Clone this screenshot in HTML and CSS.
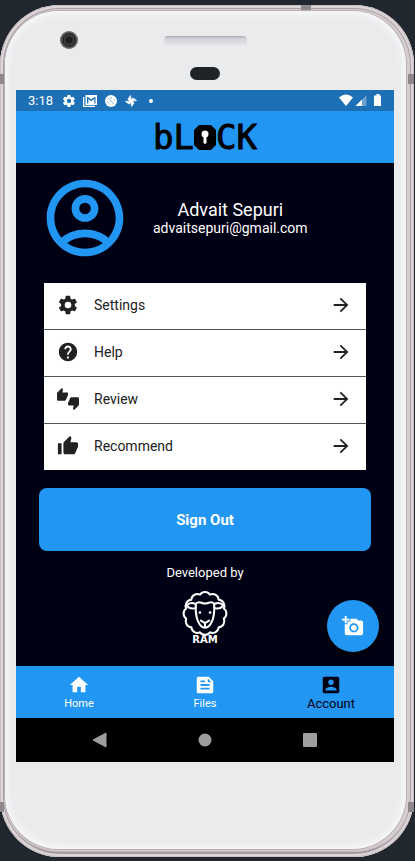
FILE: index.html
```html
<!DOCTYPE html>
<html lang="en">
<head>
<meta charset="utf-8">
<meta name="viewport" content="width=device-width, initial-scale=1">
<title>bLOCK – Account</title>
<link rel="stylesheet" href="styles.css">
</head>
<body>
<div class="phone">
  <span class="seam seam-top"></span>
  <span class="seam seam-left"></span>
  <span class="seam seam-right"></span>
  <span class="seam seam-left seam-low"></span>
  <span class="seam seam-right seam-low"></span>
  <span class="side-key"></span>
  <div class="face">
    <div class="bezel">
      <span class="camera"></span>
      <div class="bezel-middle">
        <span class="speaker"></span>
        <span class="sensor"></span>
      </div>
    </div>

    <div class="screen">
      <div class="status">
        <span class="clock">3:18</span>
        <svg class="status-icon" viewBox="2 2 20 20"><path fill-rule="evenodd" d="M19.4 13a7.500 7.500 0 0 0 0-2l2.100-1.600c.2-.2.300-.4.100-.7l-2-3.400c-.1-.2-.4-.3-.6-.2l-2.500 1a7 7 0 0 0-1.700-1l-.4-2.600a.5.5 0 0 0-.5-.5h-4a.5.5 0 0 0-.5.5L9 5.100a7 7 0 0 0-1.700 1l-2.500-1c-.2-.1-.5 0-.6.2l-2 3.400c-.1.300 0 .5.100.7L4.500 11a8 8 0 0 0 0 2l-2.200 1.600c-.1.200-.2.400-.1.700l2 3.400c.1.200.4.300.6.200l2.500-1a7 7 0 0 0 1.700 1l.4 2.600c0 .3.200.5.500.5h4c.3 0 .5-.2.500-.5l.4-2.600a7 7 0 0 0 1.700-1l2.500 1c.2.100.5 0 .6-.2l2-3.400c.2-.3.100-.5-.1-.7zM12 15.600a3.600 3.600 0 1 1 0-7.200 3.600 3.600 0 0 1 0 7.200z"/></svg>
        <svg class="status-icon status-mail" viewBox="0 0 14 12"><path d="M.7 2v9.300H12" fill="none" stroke="#fff" stroke-width="1.200"/><path fill-rule="evenodd" d="M2.500 0H14v10H2.500zM4 2v6.500h1.300V4l3 2.300 3-2.300v4.500h1.200V2h-1l-3.200 2.500L5 2z"/></svg>
        <svg class="status-icon" viewBox="0 0 12 12"><circle cx="6" cy="6" r="6"/><path d="M3 3l6 6M5.500 2l1 2M8.500 4.500l1 1M2.500 6.500l1 2" stroke="#1d70b5" stroke-width=".5"/></svg>
        <svg class="status-icon" viewBox="0 0 24 24"><path d="M12 12H9L6 8l5-7zM12 12V9l4-3 7 5zM12 12h3l3 4-5 7zM12 12v3l-4 3-7-5z" stroke="#fff" stroke-width="1.500" stroke-linejoin="round"/></svg>
        <span class="status-dot"></span>
        <svg class="status-signal" viewBox="0 0 42 13"><path d="M0 3.500Q7-2.500 14 3.500L7 12z"/><path d="M27.500 1v11h-11z" opacity=".35"/><path d="M23 5.500V12h-6.500z"/><path d="M36 1.500h1.500V0h3v1.500H42V12h-7V1.500z"/></svg>
      </div>

      <header class="app-bar">
        <h1 class="logo">bL<svg class="logo-lock" viewBox="0 0 22 25" aria-label="O"><path d="M5 0h12l5 5v15l-5 5H5l-5-5V5z"/><circle cx="11" cy="9" r="3.500" fill="#fff"/><path d="M9.500 10h3v8l-1.500 1-1.500-1z" fill="#fff"/></svg>CK</h1>
      </header>

      <main class="content">
        <section class="profile">
          <svg class="avatar" viewBox="0 0 24 24"><path fill-rule="evenodd" d="M12 2C6.480 2 2 6.480 2 12s4.480 10 10 10 10-4.480 10-10S17.520 2 12 2zM7.350 18.500C8.660 17.560 10.260 17 12 17s3.340.56 4.650 1.500C15.340 19.440 13.740 20 12 20s-3.340-.56-4.650-1.500zm10.790-1.380C16.450 15.800 14.320 15 12 15s-4.450.8-6.140 2.120C4.700 15.730 4 13.950 4 12c0-4.420 3.580-8 8-8s8 3.580 8 8c0 1.950-.7 3.730-1.860 5.120zM12 6c-1.930 0-3.500 1.570-3.500 3.500S10.070 13 12 13s3.500-1.570 3.500-3.500S13.930 6 12 6zm0 5a1.500 1.500 0 1 1 0-3 1.500 1.500 0 0 1 0 3z"/></svg>
          <div class="identity">
            <h2 class="name">Advait Sepuri</h2>
            <p class="email">advaitsepuri@gmail.com</p>
          </div>
        </section>

        <ul class="menu">
          <li><a class="menu-row" href="#settings">
            <svg class="menu-icon" viewBox="0 0 24 24"><path fill-rule="evenodd" d="M19.400 13a7.500 7.500 0 0 0 0-2l2.100-1.600c.2-.2.300-.4.100-.7l-2-3.400c-.1-.2-.4-.3-.6-.2l-2.500 1a7 7 0 0 0-1.700-1l-.4-2.600a.5.5 0 0 0-.5-.5h-4a.5.5 0 0 0-.5.5L9 5.100a7 7 0 0 0-1.700 1l-2.500-1c-.2-.1-.5 0-.6.2l-2 3.400c-.1.300 0 .5.100.7L4.500 11a8 8 0 0 0 0 2l-2.200 1.600c-.1.200-.2.400-.1.700l2 3.400c.1.200.4.300.6.200l2.500-1a7 7 0 0 0 1.700 1l.4 2.600c0 .3.200.5.500.5h4c.3 0 .5-.2.500-.5l.4-2.600a7 7 0 0 0 1.700-1l2.500 1c.2.100.5 0 .6-.2l2-3.400c.2-.3.100-.5-.1-.7zM12 15.600a3.600 3.600 0 1 1 0-7.200 3.600 3.600 0 0 1 0 7.200z"/></svg>
            <span class="menu-label">Settings</span>
            <svg class="menu-arrow" viewBox="0 0 24 24"><path d="M12 4l-1.410 1.410L16.170 11H4v2h12.170l-5.580 5.590L12 20l8-8z"/></svg></a></li>
          <li><a class="menu-row" href="#help">
            <svg class="menu-icon" viewBox="0 0 24 24"><path d="M12 2C6.480 2 2 6.480 2 12s4.480 10 10 10 10-4.480 10-10S17.520 2 12 2zm1 17h-2v-2h2v2zm2.070-7.750l-.9.920C13.450 12.900 13 13.500 13 15h-2v-.5c0-1.100.450-2.100 1.170-2.830l1.240-1.260c.370-.36.590-.86.590-1.410 0-1.100-.9-2-2-2s-2 .9-2 2H8c0-2.210 1.790-4 4-4s4 1.790 4 4c0 .88-.36 1.680-.93 2.250z"/></svg>
            <span class="menu-label">Help</span>
            <svg class="menu-arrow" viewBox="0 0 24 24"><path d="M12 4l-1.410 1.410L16.170 11H4v2h12.170l-5.580 5.590L12 20l8-8z"/></svg></a></li>
          <li><a class="menu-row" href="#review">
            <svg class="menu-icon" viewBox="0 0 24 24"><path d="M12 6c0-.55-.45-1-1-1H5.820l.66-3.180.02-.23c0-.31-.13-.59-.33-.8L5.380 0 .440 4.940C.170 5.210 0 5.590 0 6v6.500c0 .83.670 1.500 1.500 1.500h6.750c.62 0 1.150-.38 1.380-.91l2.260-5.290c.07-.17.110-.36.110-.55V6zm10.500 4h-6.750c-.62 0-1.150.38-1.380.91l-2.260 5.290c-.07.170-.11.360-.11.550V18c0 .55.450 1 1 1h5.180l-.66 3.180-.02.240c0 .31.130.59.330.8l.79.780 4.940-4.940c.27-.27.440-.65.440-1.060v-6.500c0-.83-.67-1.500-1.500-1.500z"/></svg>
            <span class="menu-label">Review</span>
            <svg class="menu-arrow" viewBox="0 0 24 24"><path d="M12 4l-1.410 1.410L16.170 11H4v2h12.170l-5.580 5.590L12 20l8-8z"/></svg></a></li>
          <li><a class="menu-row" href="#recommend">
            <svg class="menu-icon" viewBox="0 0 24 24"><path d="M1 21h4V9H1v12zm22-11c0-1.100-.9-2-2-2h-6.310l.950-4.570.030-.32c0-.41-.17-.79-.44-1.060L14.170 1 7.590 7.590C7.220 7.950 7 8.450 7 9v10c0 1.100.9 2 2 2h9c.83 0 1.540-.5 1.840-1.220l3.020-7.050c.09-.23.140-.47.140-.73v-2z"/></svg>
            <span class="menu-label">Recommend</span>
            <svg class="menu-arrow" viewBox="0 0 24 24"><path d="M12 4l-1.410 1.410L16.170 11H4v2h12.170l-5.580 5.590L12 20l8-8z"/></svg></a></li>
        </ul>

        <button class="sign-out" type="button">Sign Out</button>

        <p class="credit">Developed by</p>
        <div class="ram">
          <svg class="ram-head" viewBox="0 0 45 45" fill="none" stroke="#fff" stroke-width="2" stroke-linejoin="round" stroke-linecap="round">
            <path d="M40.900 26.900A6 6 0 0 1 35.900 35.400A6 6 0 0 1 27.400 40.400A6 6 0 0 1 17.600 40.400A6 6 0 0 1 9.100 35.400A6 6 0 0 1 4.100 26.900A6 6 0 0 1 4.100 17.100A6 6 0 0 1 9.100 8.600A6 6 0 0 1 17.600 3.600A6 6 0 0 1 27.400 3.600A6 6 0 0 1 35.900 8.600A6 6 0 0 1 40.900 17.100A6 6 0 0 1 40.900 26.900z"/>
            <path d="M13.500 13Q15 10 19 11.500Q22.500 13 26 11.500Q30 10 31.500 13Q32 22 30 28Q27 36 22.500 36Q18 36 15 28Q13 22 13.500 13z"/>
            <path d="M13 12.500Q8 10.500 4.500 14Q8 18.500 13.500 16.500M32 12.500Q37 10.500 40.500 14Q37 18.500 31.500 16.500"/>
            <path d="M18.500 29l4 2.500 4-2.500M22.500 31.500V35"/>
            <g fill="#fff" stroke="none"><circle cx="17.500" cy="21" r="1.300"/><circle cx="27.500" cy="21" r="1.300"/></g>
          </svg>
          <span class="ram-name">RAM</span>
        </div>

        <button class="fab" type="button" aria-label="Add photo">
          <svg class="fab-icon" viewBox="0 0 24 24"><path d="M3 4V1h2v3h3v2H5v3H3V6H0V4h3zm3 6V7h3V4h7l1.830 2H21c1.100 0 2 .9 2 2v12c0 1.100-.9 2-2 2H5c-1.100 0-2-.9-2-2V10h3zm7 9c2.760 0 5-2.240 5-5s-2.240-5-5-5-5 2.240-5 5 2.240 5 5 5zm-3.200-5c0 1.770 1.430 3.200 3.200 3.200s3.200-1.430 3.200-3.200-1.430-3.200-3.200-3.200-3.200 1.430-3.200 3.200z"/></svg>
        </button>
      </main>

      <nav class="tabs">
        <a class="tab" href="#home"><svg class="tab-icon" viewBox="0 0 24 24"><path d="M10 20v-6h4v6h5v-8h3L12 3 2 12h3v8z"/></svg>Home</a>
        <a class="tab" href="#files"><svg class="tab-icon" viewBox="0 0 24 24"><path fill-rule="evenodd" d="M16 3H5c-1.100 0-2 .9-2 2v14c0 1.100.9 2 2 2h14c1.100 0 2-.9 2-2V8l-5-5zM7 7h5v2H7V7zm10 10H7v-2h10v2zm0-4H7v-2h10v2zm-2-4V5l4 4h-4z"/></svg>Files</a>
        <a class="tab tab-active" href="#account" aria-current="page"><svg class="tab-icon" viewBox="0 0 24 24"><path fill-rule="evenodd" d="M3 5v14c0 1.100.890 2 2 2h14c1.100 0 2-.9 2-2V5c0-1.100-.9-2-2-2H5c-1.110 0-2 .9-2 2zm12 4c0 1.660-1.340 3-3 3s-3-1.340-3-3 1.340-3 3-3 3 1.340 3 3zm-9 8c0-2 4-3.100 6-3.100s6 1.100 6 3.100v1H6v-1z"/></svg>Account</a>
      </nav>

      <div class="system-nav">
        <button class="system-key" type="button" aria-label="Back"><svg class="system-icon" viewBox="0 0 16 16"><path d="M14 1v14L1 8z" stroke-width="1" stroke="#9e9e9e" stroke-linejoin="round"/></svg></button>
        <button class="system-key" type="button" aria-label="Home"><svg class="system-icon" viewBox="0 0 16 16"><circle cx="8" cy="8" r="6.500"/></svg></button>
        <button class="system-key" type="button" aria-label="Overview"><svg class="system-icon" viewBox="0 0 16 16"><rect x="1" y="1" width="14" height="14" rx="1"/></svg></button>
      </div>
    </div>
  </div>
</div>
</body>
</html>
```
FILE: styles.css
```css
* {
  box-sizing: border-box;
}

body {
  margin: 0;
  padding: 5px 1px 4px 0;
  min-height: 100vh;
  display: flex;
  background: #20272f;
  font-family: Roboto, "Liberation Sans", sans-serif;
}

h1, h2, p, ul {
  margin: 0;
  padding: 0;
}

a {
  color: inherit;
  text-decoration: none;
}

button {
  border: 0;
  padding: 0;
  font: inherit;
  cursor: pointer;
}

/* Device shell */
.phone {
  position: relative;
  flex: 1;
  display: flex;
  padding: 6px 8px 8px 5px;
  border-radius: 60px;
  background: #d6cdd1;
  box-shadow: inset 0 0 0 1px #c9c0c4, inset 0 0 0 3px #ddd5d8, inset 0 0 0 4px #a9a1a5, inset 0 -5px 2px #8f878b;
}

.face {
  flex: 1;
  display: flex;
  flex-direction: column;
  padding: 0 12px 0 11px;
  border-radius: 54px;
  background: #eaebed;
  box-shadow: inset 0 0 6px 3px #f8f8fa, 0 0 0 1px #b5adb1;
}

.seam {
  position: absolute;
  background: #8e878b;
}

.seam-top {
  top: 0;
  right: 103px;
  width: 10px;
  height: 5px;
}

.seam-left,
.seam-right {
  top: 69px;
  width: 4px;
  height: 10px;
}

.seam-left {
  left: 0;
}

.seam-right {
  right: 0;
  width: 6px;
}

.seam-low {
  top: auto;
  bottom: 45px;
}

.side-key {
  position: absolute;
  right: -1px;
  top: 203px;
  width: 1px;
  height: 123px;
  background: #20272f;
}

.bezel {
  display: grid;
  grid-template-columns: 1fr auto 1fr;
  height: 79px;
}

.camera {
  width: 18px;
  height: 18px;
  margin: 20px 0 0 44px;
  border-radius: 50%;
  background: radial-gradient(circle, #1b1d1d 0 3px, #3a3b3c 4px 5px, #202122 6px, #626466 8px);
}

.bezel-middle {
  display: flex;
  flex-direction: column;
  align-items: center;
  padding-top: 25px;
  gap: 22px;
}

.speaker {
  width: 83px;
  height: 9px;
  border-radius: 4px;
  background: linear-gradient(#a9aab4, #d3d4da 30%, #e3e4e8);
}

.sensor {
  width: 30px;
  height: 13px;
  border-radius: 7px;
  background: #202328;
}

.screen {
  flex: 1;
  display: flex;
  flex-direction: column;
  margin-bottom: 87px;
  background: #000014;
  color: #fff;
}

/* Status bar */
.status {
  display: flex;
  align-items: center;
  gap: 8px;
  height: 21px;
  padding: 0 13px 0 12px;
  background: #1d70b5;
}

.clock {
  font-size: 13px;
  margin-right: 2px;
}

.status-icon {
  width: 12px;
  height: 12px;
  fill: #fff;
}

.status-mail {
  width: 14px;
}

.status-dot {
  width: 4px;
  height: 4px;
  margin-left: 4px;
  border-radius: 50%;
  background: #fff;
}

.status-signal {
  width: 42px;
  height: 13px;
  margin-left: auto;
  fill: #fff;
}

/* App bar */
.app-bar {
  display: flex;
  align-items: center;
  justify-content: center;
  height: 52px;
  background: #2196f3;
}

.logo {
  display: flex;
  align-items: center;
  color: #000;
  font: 34px/40px "DejaVu Sans Mono", monospace;
  -webkit-text-stroke: 1px #000;
}

.logo-lock {
  width: 22px;
  height: 25px;
}

/* Account page */
.content {
  position: relative;
  flex: 1;
  display: flex;
  flex-direction: column;
  padding: 8px 23px 0;
  border-top: 2px solid #000;
}

.profile {
  display: flex;
  align-items: center;
  height: 90px;
}

.avatar {
  width: 92px;
  height: 92px;
  fill: #2196f3;
}

.identity {
  padding-left: 22px;
  text-align: center;
}

.name {
  font-size: 18px;
  line-height: 20px;
  font-weight: 400;
}

.email {
  font-size: 14px;
  line-height: 16px;
}

.menu {
  margin: 20px 5px 0;
  list-style: none;
  background: #fff;
  color: #212121;
}

.menu li + li {
  border-top: 1px solid #55555c;
}

.menu-row {
  display: flex;
  align-items: center;
  height: 46px;
  padding: 0 14px 2px 13px;
}

.menu-icon {
  width: 22px;
  height: 22px;
  margin-right: 15px;
  fill: #212121;
}

.menu-label {
  flex: 1;
  font-size: 14px;
}

.menu-arrow {
  width: 22px;
  height: 22px;
  fill: #212121;
}

.sign-out {
  height: 63px;
  margin-top: 18px;
  border-radius: 8px;
  background: #2196f3;
  color: #fff;
  font-size: 15px;
  font-weight: 700;
}

.credit {
  margin-top: 14px;
  font-size: 13px;
  line-height: 16px;
  text-align: center;
}

.ram {
  display: flex;
  flex-direction: column;
  align-items: center;
  margin-top: 10px;
}

.ram-head {
  width: 46px;
  height: 46px;
}

.ram-name {
  margin-top: -2px;
  font: 700 10px/9px "DejaVu Sans", sans-serif;
}

.fab {
  position: absolute;
  right: 15px;
  bottom: 14px;
  display: grid;
  place-items: center;
  width: 52px;
  height: 52px;
  border-radius: 50%;
  background: #2196f3;
  box-shadow: 0 3px 5px #000;
}

.fab-icon {
  width: 22px;
  height: 22px;
  fill: #fff;
}

/* Bottom navigation */
.tabs {
  display: grid;
  grid-template-columns: repeat(3, 1fr);
  height: 52px;
  background: #2196f3;
}

.tab {
  display: flex;
  flex-direction: column;
  align-items: center;
  padding-top: 8px;
  font-size: 11px;
  line-height: 16px;
}

.tab-active {
  color: #000014;
  font-size: 13px;
}

.tab-icon {
  width: 22px;
  height: 22px;
  fill: currentColor;
}

.system-nav {
  display: flex;
  justify-content: center;
  gap: 89px;
  height: 44px;
  background: #000;
}

.system-key {
  display: grid;
  place-items: center;
  width: 16px;
  background: none;
}

.system-icon {
  width: 16px;
  height: 16px;
  fill: #9e9e9e;
}
```
